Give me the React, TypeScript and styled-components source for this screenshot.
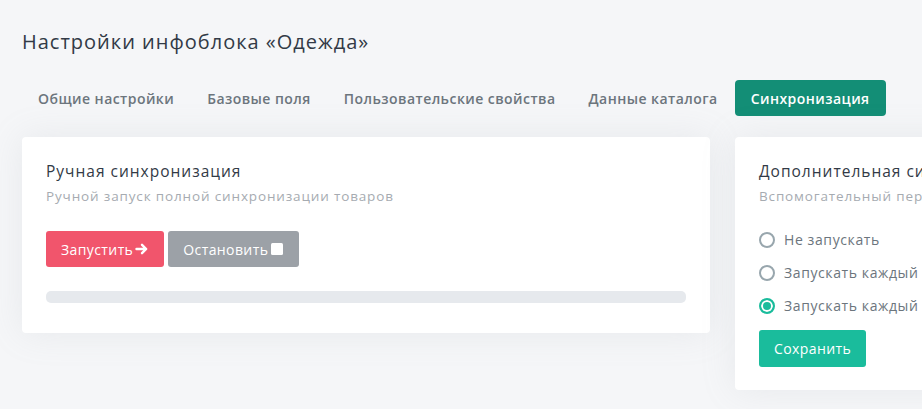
import { useState } from "react";
import styled, { createGlobalStyle } from "styled-components";

const GlobalStyle = createGlobalStyle`
  html, body {
    margin: 0;
    padding: 0;
    background: #f5f6f8;
    overflow: hidden;
  }
  body {
    font-family: "Open Sans", "Noto Sans", sans-serif;
    color: #323a46;
  }
  * {
    box-sizing: border-box;
  }
`;

const Page = styled.div`
  width: 922px;
  height: 409px;
  padding: 28px 0 0 22px;
  overflow: hidden;
`;

const Title = styled.h1`
  margin: 0;
  font-size: 20px;
  font-weight: 400;
  line-height: 28px;
  letter-spacing: 1px;
  color: #323a46;
`;

const Tabs = styled.nav`
  display: flex;
  margin-top: 24px;
`;

const Tab = styled.button<{ $active?: boolean }>`
  height: 36px;
  padding: 0 16px;
  margin-right: 1px;
  border: none;
  border-radius: 4px;
  font-family: inherit;
  font-size: 14px;
  font-weight: 600;
  letter-spacing: 0.45px;
  white-space: nowrap;
  cursor: pointer;
  background: ${(p) => (p.$active ? "#138e76" : "transparent")};
  color: ${(p) => (p.$active ? "#ffffff" : "#6c757d")};
`;

const Cards = styled.div`
  display: flex;
  align-items: flex-start;
  gap: 25px;
  margin-top: 21px;
`;

const Card = styled.section<{ $bottom: number }>`
  flex: 0 0 688px;
  background: #fff;
  border-radius: 4px;
  padding: 24px 24px ${(p) => p.$bottom}px 24px;
  box-shadow: 0 0 35px rgba(154, 161, 171, 0.15);
`;

const CardTitle = styled.h2`
  margin: 0;
  font-size: 15.5px;
  font-weight: 400;
  line-height: 20px;
  letter-spacing: 1px;
  color: #323a46;
  white-space: nowrap;
`;

const CardSub = styled.p`
  margin: 6px 0 0;
  font-size: 13.5px;
  line-height: 18px;
  letter-spacing: 0.85px;
  color: #a6abb1;
  white-space: nowrap;
`;

const Buttons = styled.div`
  display: flex;
  gap: 4px;
  margin-top: 26px;
`;

const Btn = styled.button<{ $color: string }>`
  height: 36px;
  padding: 0 15px;
  border: none;
  border-radius: 3px;
  background: ${(p) => p.$color};
  color: #fff;
  font-family: inherit;
  font-size: 14px;
  letter-spacing: 0.4px;
  display: inline-flex;
  align-items: center;
  gap: 2px;
  cursor: pointer;
`;

const Progress = styled.div`
  margin-top: 24px;
  height: 12px;
  border-radius: 5px;
  background: #e6e9ed;
`;

const Radios = styled.div`
  display: flex;
  flex-direction: column;
  gap: 15px;
  margin-top: 26px;
`;

const RadioRow = styled.label`
  display: flex;
  align-items: center;
  gap: 9px;
  font-size: 14px;
  line-height: 18px;
  letter-spacing: 0.6px;
  color: #6c757d;
  white-space: nowrap;
  cursor: pointer;
`;

const RadioDot = styled.span<{ $checked?: boolean }>`
  width: 16px;
  height: 16px;
  flex: 0 0 16px;
  border-radius: 50%;
  border: 2px solid ${(p) => (p.$checked ? "#1abc9c" : "#98a6ad")};
  background: ${(p) => (p.$checked ? "#1abc9c" : "#fff")};
  box-shadow: ${(p) => (p.$checked ? "inset 0 0 0 2px #fff" : "none")};
`;

const SaveBtn = styled(Btn)`
  margin-top: 15px;
  height: 37px;
`;

const tabs = [
  "Общие настройки",
  "Базовые поля",
  "Пользовательские свойства",
  "Данные каталога",
  "Синхронизация",
];

const options = ["Не запускать", "Запускать каждый час", "Запускать каждый день"];

function App() {
  const [choice, setChoice] = useState(2);

  return (
    <Page>
      <GlobalStyle />
      <Title>Настройки инфоблока «Одежда»</Title>
      <Tabs>
        {tabs.map((t) => (
          <Tab key={t} $active={t === "Синхронизация"}>
            {t}
          </Tab>
        ))}
      </Tabs>
      <Cards>
        <Card $bottom={30}>
          <CardTitle>Ручная синхронизация</CardTitle>
          <CardSub>Ручной запуск полной синхронизации товаров</CardSub>
          <Buttons>
            <Btn $color="#f1556c">
              Запустить
              <svg width="14" height="14" viewBox="0 0 14 14">
                <path
                  d="M1.5 7h9M7 2.8L11.2 7 7 11.2"
                  stroke="#fff"
                  strokeWidth="2.4"
                  fill="none"
                  strokeLinecap="round"
                  strokeLinejoin="round"
                />
              </svg>
            </Btn>
            <Btn $color="#9ca1a7">
              Остановить
              <svg width="14" height="14" viewBox="0 0 14 14">
                <rect x="1" y="1" width="12" height="12" rx="1.5" fill="#fff" />
              </svg>
            </Btn>
          </Buttons>
          <Progress />
        </Card>
        <Card $bottom={23}>
          <CardTitle>Дополнительная синхронизация</CardTitle>
          <CardSub>Вспомогательный периодический запуск синхронизации</CardSub>
          <Radios>
            {options.map((o, i) => (
              <RadioRow key={o} onClick={() => setChoice(i)}>
                <RadioDot $checked={choice === i} />
                {o}
              </RadioRow>
            ))}
          </Radios>
          <SaveBtn $color="#1abc9c">Сохранить</SaveBtn>
        </Card>
      </Cards>
    </Page>
  );
}

export default App;
